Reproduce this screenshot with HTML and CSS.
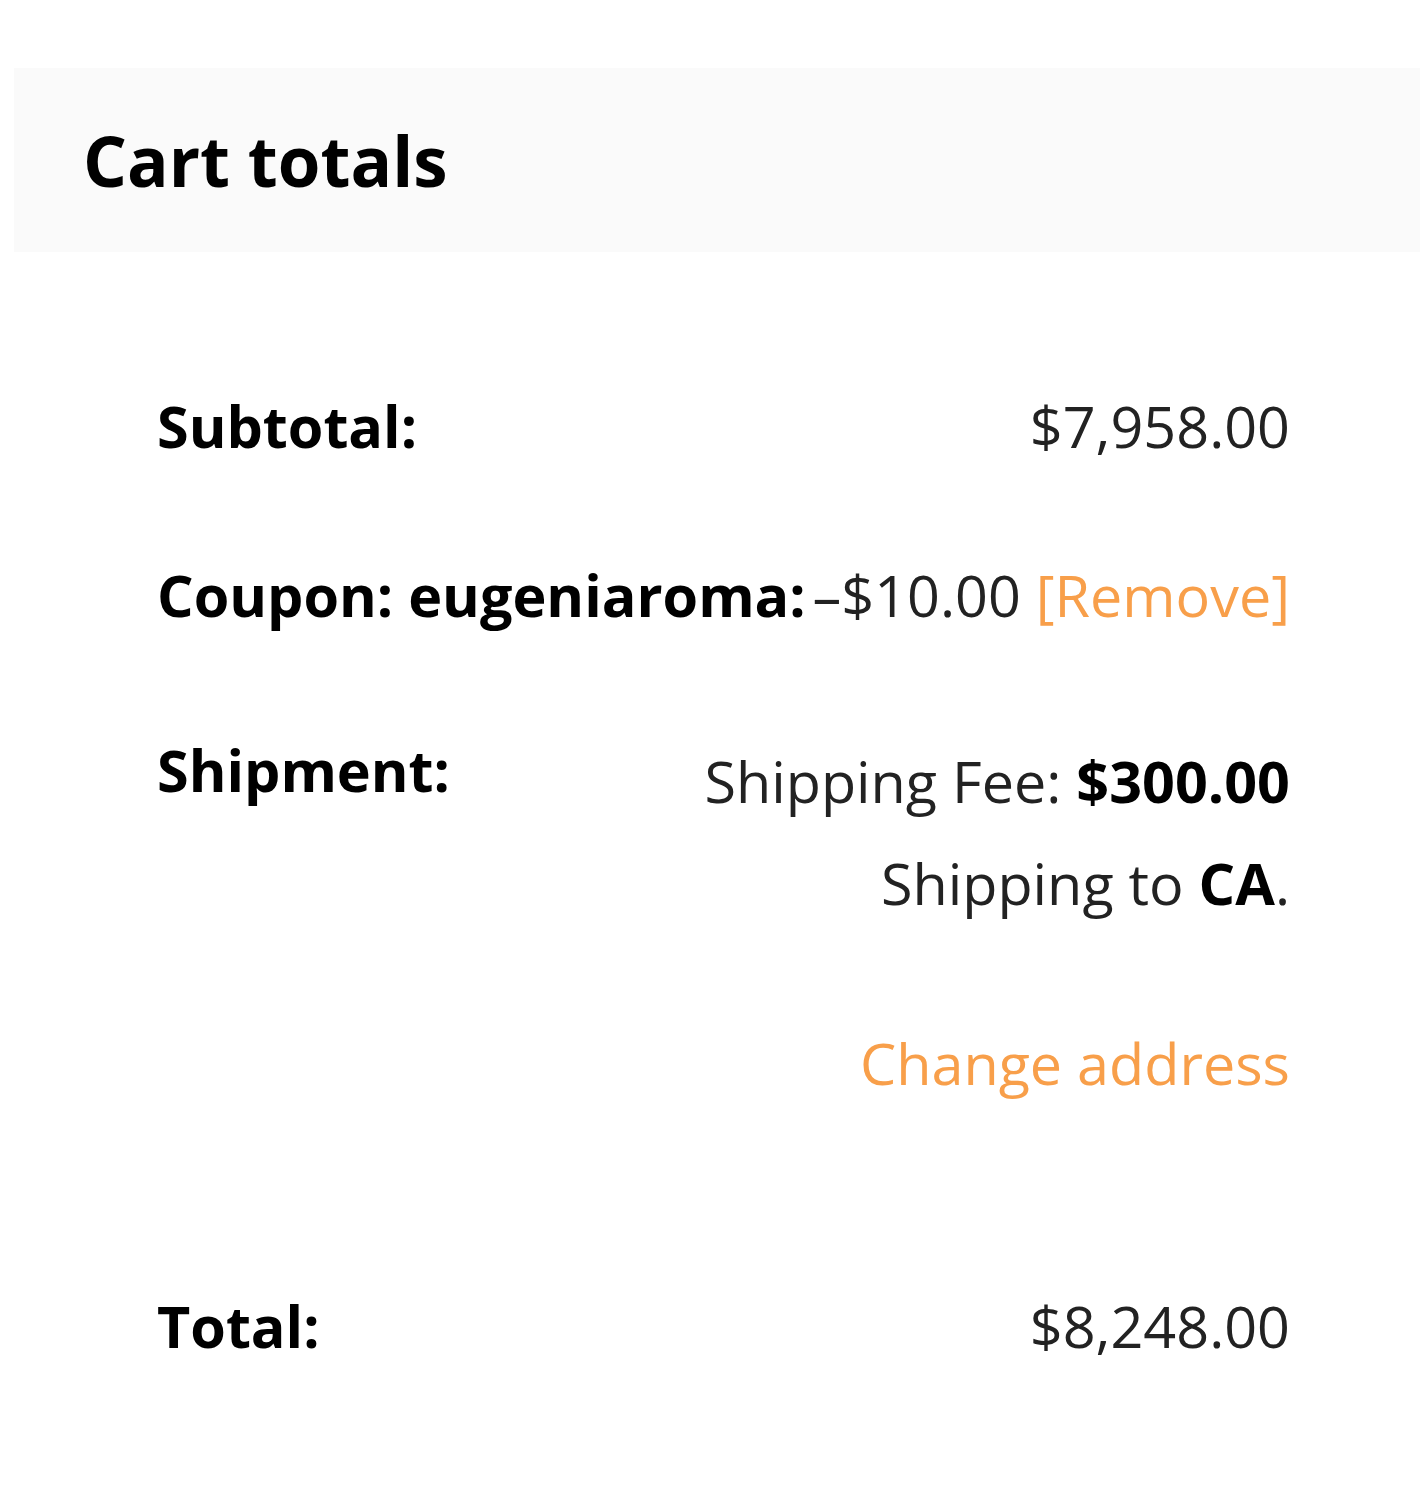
FILE: index.html
```html
<!DOCTYPE html>
<html lang="en">
<head>
<meta charset="utf-8">
<title>Cart totals</title>
<link rel="stylesheet" href="styles.css">
</head>
<body>
<div class="cart">
  <div class="head"><h2 class="title">Cart totals</h2></div>
  <div class="rows">
    <div class="row">
      <div class="label">Subtotal:</div>
      <div class="value">$7,958.00</div>
    </div>
    <div class="row">
      <div class="label">Coupon: eugeniaroma:</div>
      <div class="value">–$10.00 <a class="link" href="#">[Remove]</a></div>
    </div>
    <div class="row row-ship">
      <div class="label label-ship">Shipment:</div>
      <div class="value value-ship">
        <div>Shipping Fee: <strong>$300.00</strong></div>
        <div>Shipping to <strong>CA</strong>.</div>
        <div class="change"><a class="link" href="#">Change address</a></div>
      </div>
    </div>
    <div class="row">
      <div class="label">Total:</div>
      <div class="value">$8,248.00</div>
    </div>
  </div>
</div>
</body>
</html>
```

FILE: styles.css
```css
html, body {
  margin: 0;
  padding: 0;
  background: #ffffff;
}
body {
  font-family: "Open Sans", "Liberation Sans", sans-serif;
  font-size: 57.5px;
  line-height: 102px;
  color: #222222;
}
.cart {
  margin: 68px 0 0 14px;
}
.head {
  background: #fafafa;
  height: 184px;
  box-sizing: border-box;
  padding: 41px 0 0 69px;
}
.title {
  margin: 0;
  font-size: 69px;
  line-height: 102px;
  font-weight: 700;
  color: #000000;
}
.rows {
  padding: 89px 130px 0 143px;
}
.row {
  display: flex;
  justify-content: space-between;
  align-items: flex-start;
  padding: 34px 0 33px;
  white-space: nowrap;
}
.label {
  font-weight: 700;
  color: #000000;
}
.value {
  text-align: right;
}
.value strong {
  font-weight: 700;
  color: #000000;
}
.link {
  color: #f89f4a;
  text-decoration: none;
}
.row-ship {
  padding-top: 40px;
  padding-bottom: 127px;
}
.value-ship {
  padding-top: 11px;
}
.change {
  margin-top: 78px;
}
```
